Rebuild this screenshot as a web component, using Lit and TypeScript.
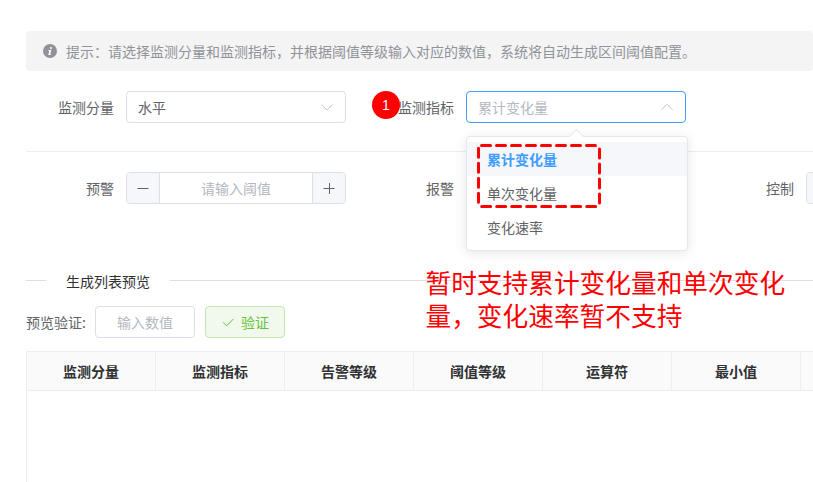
import { LitElement, html, css, svg } from "lit";
import { customElement } from "lit/decorators.js";

const chevron = (up: boolean) => html`<svg class="chev" width="14" height="14" viewBox="0 0 14 14" fill="none">
  <path d=${up ? "M1.5 9.8 L7 4.3 L12.5 9.8" : "M1.5 4.6 L7 10.1 L12.5 4.6"} stroke="#c0c4cc" stroke-width="1"/></svg>`;

const stepper = (label: string) => html`
  <div class="item">
    <label class="lbl">${label}</label>
    <div class="num">
      <span class="step left"><svg width="14" height="14" viewBox="0 0 14 14"><path d="M1.5 7.5H12.5" stroke="#606266" stroke-width="1"/></svg></span>
      <input class="num-in" placeholder="请输入阈值" />
      <span class="step right"><svg width="14" height="14" viewBox="0 0 14 14"><path d="M1.5 7.5H12.5M7.5 2V13" stroke="#606266" stroke-width="1"/></svg></span>
    </div>
  </div>`;

@customElement("app-root")
export class AppRoot extends LitElement {
  static styles = css`
    :host {
      display: block;
      position: relative;
      width: 813px;
      height: 482px;
      overflow: hidden;
      background: #fff;
      font-family: "Noto Sans CJK SC", "Liberation Sans", sans-serif;
      font-size: 14px;
      color: #606266;
    }
    .page { width: 1200px; padding: 31px 0 0 26px; box-sizing: border-box; }
    .alert {
      height: 40px; width: 787px; box-sizing: border-box; background: #f4f4f5; border-radius: 4px;
      display: flex; align-items: center; gap: 9px; padding: 0 0 0 17px; color: #909399; line-height: 20px;
    }
    .row { display: flex; gap: 20px; }
    .r1 { margin-top: 20px; padding-bottom: 28px; border-bottom: 1px solid #ebeef5; width: 787px; }
    .r2 { margin-top: 20px; }
    .item { display: flex; width: 320px; flex: none; align-items: center; }
    .lbl { width: 88px; margin-right: 12px; text-align: right; line-height: 32px; flex: none; }
    .select {
      width: 220px; height: 32px; box-sizing: border-box; border: 1px solid #dcdfe6; border-radius: 4px;
      padding: 0 11px; display: flex; align-items: center; justify-content: space-between; line-height: 30px;
    }
    .select.open { border-color: #409eff; }
    .select.open .val { color: #b4b8bf; }
    .num {
      width: 220px; height: 32px; box-sizing: border-box; border: 1px solid #dcdfe6; border-radius: 4px;
      display: flex; flex: none; overflow: hidden;
    }
    .step { width: 32px; flex: none; background: #f5f7fa; display: flex; align-items: center; justify-content: center; }
    .step.left { border-right: 1px solid #dcdfe6; }
    .step.right { border-left: 1px solid #dcdfe6; }
    input {
      font: inherit; border: 0; outline: 0; padding: 0; text-align: center; min-width: 0; background: #fff;
    }
    input::placeholder { color: #b4b8bf; opacity: 1; }
    .num-in { flex: 1; width: 100%; }
    .section { display: flex; align-items: center; margin-top: 66px; width: 787px; height: 20px; color: #303133; }
    .section i { height: 1px; background: #dcdfe6; display: block; }
    .section .a { width: 20px; }
    .section .b { flex: 1; }
    .section span { padding: 0 20px; line-height: 20px; position: relative; top: 1px; }
    .preview { display: flex; align-items: center; margin-top: 16px; height: 32px; }
    .preview .t { width: 69px; flex: none; white-space: nowrap; }
    .pv-in {
      width: 100px; height: 32px; box-sizing: border-box; border: 1px solid #dcdfe6; border-radius: 4px;
    }
    .btn {
      margin-left: 10px; width: 80px; height: 32px; box-sizing: border-box; background: #f0f9eb;
      border: 1px solid #c2e7b0; border-radius: 4px; color: #67c23a; font: inherit;
      display: flex; align-items: center; justify-content: center; gap: 6px; padding: 0;
    }
    .table { margin-top: 13px; width: 800px; height: 140px; border-left: 1px solid #ebeef5; }
    .thead { display: flex; height: 40px; border-top: 1px solid #ebeef5; border-bottom: 1px solid #ebeef5; background: #fafafa; width: 1000px; box-sizing: border-box; }
    .th {
      width: 129px; box-sizing: border-box; flex: none; border-right: 1px solid #ebeef5; text-align: center;
      font-weight: 700; color: #303133; line-height: 38px;
    }
    .pop {
      position: absolute; left: 466px; top: 136px; width: 222px; height: 115px; box-sizing: border-box;
      background: #fff; border: 1px solid #e4e7ed; border-radius: 4px; box-shadow: 0 2px 12px rgba(0,0,0,.1);
      padding: 5px 0;
    }
    .pop::before {
      content: ""; position: absolute; left: 104px; top: -6px; width: 10px; height: 10px; background: #fff;
      border-left: 1px solid #e4e7ed; border-top: 1px solid #e4e7ed; transform: rotate(45deg);
    }
    .opt { position: relative; height: 34px; line-height: 34px; padding: 0 20px; }
    .opt.sel { background: #f5f7fa; color: #409eff; font-weight: 700; }
    .dash { position: absolute; left: 476px; top: 143px; display: block; }
    .badge {
      position: absolute; left: 372px; top: 91px; width: 28px; height: 28px; border-radius: 50%; background: #ff0000;
      color: #fff; font: 14px/28px "Liberation Sans", sans-serif; text-align: center;
    }
    .note {
      position: absolute; left: 425.5px; top: 265px; width: 380px; color: #ff0000; font-size: 25.7px; line-height: 33px;
    }
  `;

  render() {
    const cols = ["监测分量", "监测指标", "告警等级", "阈值等级", "运算符", "最小值", ""];
    return html`
      <div class="page">
        <div class="alert">
          <svg width="14" height="14" viewBox="0 0 14 14"><circle cx="7" cy="7" r="7" fill="#909399"/>
            ${svg`<path d="M7.9 2.9a1 1 0 1 0 .01 0zM5.6 6h2.7l-1.1 4.2h.9l-.2.9H5.2l1.1-4.2h-.9z" fill="#fff"/>`}</svg>
          <span>提示：请选择监测分量和监测指标，并根据阈值等级输入对应的数值，系统将自动生成区间阈值配置。</span>
        </div>
        <div class="row r1">
          <div class="item">
            <label class="lbl">监测分量</label>
            <div class="select"><span class="val">水平</span>${chevron(false)}</div>
          </div>
          <div class="item">
            <label class="lbl">监测指标</label>
            <div class="select open"><span class="val">累计变化量</span>${chevron(true)}</div>
          </div>
        </div>
        <div class="row r2">
          ${stepper("预警")}${stepper("报警")}${stepper("控制")}
        </div>
        <div class="section"><i class="a"></i><span>生成列表预览</span><i class="b"></i></div>
        <div class="preview">
          <span class="t">预览验证:</span>
          <input class="pv-in" placeholder="输入数值" />
          <button class="btn">
            <svg width="14" height="14" viewBox="0 0 14 14" fill="none"><path d="M2 7.3 L5.6 10.9 L12.4 4" stroke="#67c23a" stroke-width="1"/></svg>
            <span>验证</span>
          </button>
        </div>
        <div class="table">
          <div class="thead">${cols.map((c) => html`<div class="th">${c}</div>`)}</div>
        </div>
      </div>
      <div class="pop">
        <div class="opt sel">累计变化量</div>
        <div class="opt">单次变化量</div>
        <div class="opt">变化速率</div>
      </div>
      <svg class="dash" width="126" height="66" viewBox="0 0 126 66" fill="none">
        <rect x="2.5" y="2.5" width="121" height="61" rx="3" stroke="#ff0000" stroke-width="3" stroke-linecap="round" stroke-dasharray="9 6"/>
      </svg>
      <div class="badge">1</div>
      <div class="note">暂时支持累计变化量和单次变化量，变化速率暂不支持</div>
    `;
  }
}
